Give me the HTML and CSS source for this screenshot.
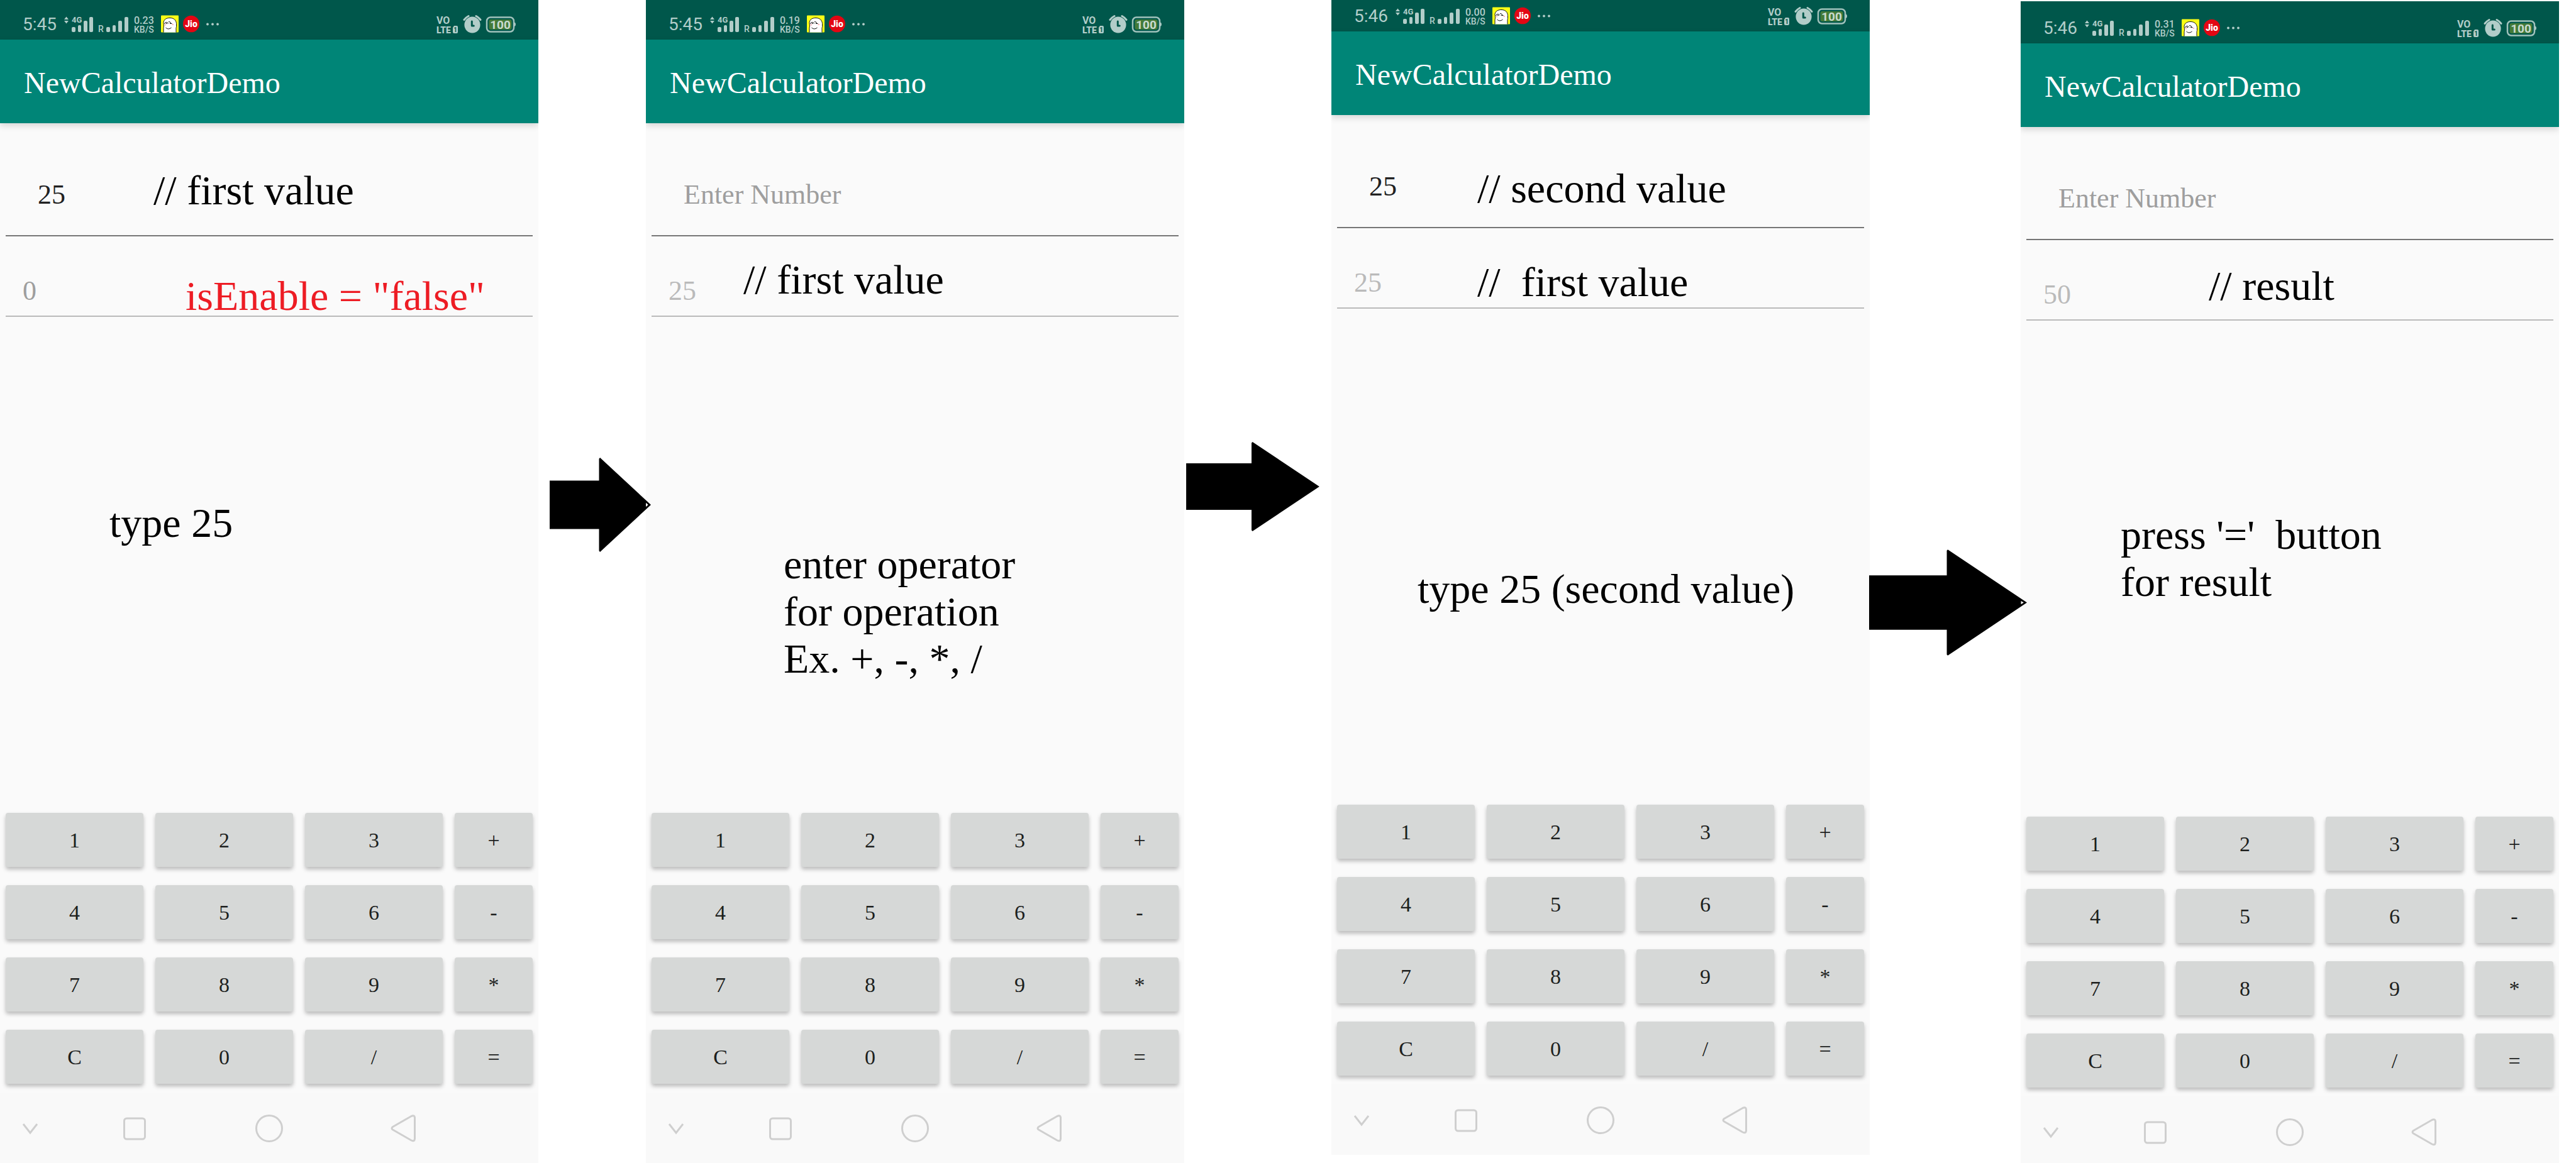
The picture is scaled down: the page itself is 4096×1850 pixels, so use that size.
FILE: index.html
```html
<!DOCTYPE html>
<html lang="en">
<head>
<meta charset="utf-8">
<title>NewCalculatorDemo</title>
<link rel="stylesheet" href="styles.css">
</head>
<body>
<svg class="sprite" aria-hidden="true">
  <symbol id="signal" viewBox="102 24 102 30" overflow="visible">
    <path d="M102 31l3.500-4.500 3.500 4.500zM102 33h7l-3.500 4.500z"/>
    <text x="114" y="36" font-size="13" font-weight="700">4G</text>
    <rect x="114" y="43" width="6" height="8" rx="2"/><rect x="124" y="40" width="5" height="11" rx="2"/><rect x="133" y="33" width="6" height="18" rx="2"/><rect x="142" y="27" width="6" height="24" rx="2"/>
    <text x="156" y="51" font-size="14" font-weight="500">R</text>
    <rect x="169" y="43" width="6" height="8" rx="2"/><rect x="179" y="40" width="5" height="11" rx="2"/><rect x="188" y="33" width="6" height="18" rx="2"/><rect x="198" y="27" width="6" height="24" rx="2"/>
  </symbol>
  <symbol id="face" viewBox="0 0 28 27">
    <rect width="28" height="27" rx="1" fill="#fcff16"/>
    <path d="M4 27V20C5 16 4 14 4 11C5 6 9 4 14 4C20 4 24 7 24.500 13V18L24 20V27z" fill="#fff"/>
    <path d="M4 27V20C5 16 4 14 4 11C5 6 9 4 14 4C20 4 24 7 24.500 13V18L24 20V27M5.500 13.500q1-3 3.500-2.500 2 .500 3 2M12 10q3-.500 4 3M7.500 19.500q4 4 9 0M8 13h2M14 13h3.500" fill="none" stroke="#111"/>
    <path d="M5.500 15h2.500M17.500 14.500h2.500" stroke="#ffb9bd" stroke-width="2"/>
  </symbol>
  <symbol id="jio" viewBox="0 0 26 27" overflow="visible">
    <ellipse cx="13" cy="13.500" rx="13" ry="13.300" fill="#e30613"/>
    <text x="13" y="18.500" font-size="14" font-weight="900" fill="#fff" text-anchor="middle">Jio</text>
  </symbol>
  <symbol id="dots" viewBox="0 0 20 30">
    <circle cx="2" cy="14.500" r="1.900"/><circle cx="10" cy="14.500" r="1.900"/><circle cx="18" cy="14.500" r="1.900"/>
  </symbol>
  <symbol id="system" viewBox="694 24 126 30" overflow="visible">
    <text x="694" y="38" font-size="16" font-weight="700">VO</text>
    <text x="694" y="53" font-size="14" font-weight="900">LTE</text>
    <path d="M722 41h4q2 0 2 2v8q0 2-2 2h-4q-2 0-2-2v-7z"/>
    <text x="724" y="51" font-size="10" font-weight="700" fill="#00574b" text-anchor="middle">1</text>
    <ellipse cx="751" cy="39.500" rx="12.600" ry="13"/>
    <path d="M738 31.500q3-4 7-6M764 31.500q-3-4-7-6" fill="none" stroke="#b2cdc9" stroke-width="3" stroke-linecap="round"/>
    <path d="M750.300 34v7h3" fill="none" stroke="#00574b" stroke-width="3" stroke-linecap="round" stroke-linejoin="round"/>
    <rect x="774" y="27.500" width="43" height="23" rx="6" fill="none" stroke="#9fc1bb" stroke-width="2.500"/>
    <path d="M818 35.500q2 .500 2 3.300t-2 3.200z"/>
    <rect x="777.500" y="31" width="36" height="16" rx="3" fill="#437a38"/>
    <text x="795.500" y="46" font-size="19" font-weight="700" fill="#c9dad0" text-anchor="middle">100</text>
  </symbol>
  <symbol id="hide" viewBox="0 0 44 44"><path d="M11 15l11 14 11-14"/></symbol>
  <symbol id="recent" viewBox="0 0 44 44"><rect x="5.500" y="6" width="33" height="33" rx="4"/></symbol>
  <symbol id="home" viewBox="0 0 44 44"><circle cx="22" cy="22" r="20.500"/></symbol>
  <symbol id="back" viewBox="0 0 44 44"><path d="M4.500 19.500L34 2.500Q39 .500 39.500 4.500V38.500Q39 43.500 34 41L4.500 24Q1.500 22 4.500 19.500z"/></symbol>
</svg>

<main class="flow">
  <section class="phone">
    <div class="status">
      <span class="time">5:45</span>
      <svg class="signal"><use href="#signal"/></svg>
      <span class="speed"><span class="rate">0.23</span><span class="unit">KB/S</span></span>
      <svg class="face"><use href="#face"/></svg>
      <svg class="jio"><use href="#jio"/></svg>
      <svg class="dots"><use href="#dots"/></svg>
      <svg class="system"><use href="#system"/></svg>
    </div>
    <header class="appbar"><h1>NewCalculatorDemo</h1></header>
    <input class="field entry" type="text" value="25" placeholder="Enter Number" aria-label="Enter Number">
    <input class="field result" type="text" placeholder="0" aria-label="Result" disabled>
    <div class="keypad">
      <button>1</button><button>2</button><button>3</button><button>+</button>
      <button>4</button><button>5</button><button>6</button><button>-</button>
      <button>7</button><button>8</button><button>9</button><button>*</button>
      <button>C</button><button>0</button><button>/</button><button>=</button>
    </div>
    <nav class="softkeys">
      <button aria-label="Hide"><svg><use href="#hide"/></svg></button>
      <button aria-label="Recent apps"><svg><use href="#recent"/></svg></button>
      <button aria-label="Home"><svg><use href="#home"/></svg></button>
      <button aria-label="Back"><svg><use href="#back"/></svg></button>
    </nav>
    <p class="note one-entry">// first value</p>
    <p class="note one-result">isEnable = "false"</p>
    <p class="note one-step">type 25</p>
  </section>

  <div class="link link-one">
    <svg class="arrow" viewBox="0 0 203 189"><path d="M0 46H99V2l2-2 102 94.500L101 189l-2-2V143H0z"/><path class="notch" d="M193 90.500l4.500 4-4.500 4z"/></svg>
  </div>

  <section class="phone">
    <div class="status">
      <span class="time">5:45</span>
      <svg class="signal"><use href="#signal"/></svg>
      <span class="speed"><span class="rate">0.19</span><span class="unit">KB/S</span></span>
      <svg class="face"><use href="#face"/></svg>
      <svg class="jio"><use href="#jio"/></svg>
      <svg class="dots"><use href="#dots"/></svg>
      <svg class="system"><use href="#system"/></svg>
    </div>
    <header class="appbar"><h1>NewCalculatorDemo</h1></header>
    <input class="field entry" type="text" placeholder="Enter Number" aria-label="Enter Number">
    <input class="field result" type="text" value="25" aria-label="Result" disabled>
    <div class="keypad">
      <button>1</button><button>2</button><button>3</button><button>+</button>
      <button>4</button><button>5</button><button>6</button><button>-</button>
      <button>7</button><button>8</button><button>9</button><button>*</button>
      <button>C</button><button>0</button><button>/</button><button>=</button>
    </div>
    <nav class="softkeys">
      <button aria-label="Hide"><svg><use href="#hide"/></svg></button>
      <button aria-label="Recent apps"><svg><use href="#recent"/></svg></button>
      <button aria-label="Home"><svg><use href="#home"/></svg></button>
      <button aria-label="Back"><svg><use href="#back"/></svg></button>
    </nav>
    <p class="note two-result">// first value</p>
    <p class="note two-step">enter operator
for operation
Ex. +, -, *, /</p>
  </section>

  <div class="link link-two">
    <svg class="arrow" viewBox="0 0 267 179"><path d="M0 43H131V2l2-2 134 89.500L133 179l-2-2V136H0z"/></svg>
  </div>

  <section class="phone raised">
    <div class="status">
      <span class="time">5:46</span>
      <svg class="signal"><use href="#signal"/></svg>
      <span class="speed"><span class="rate">0.00</span><span class="unit">KB/S</span></span>
      <svg class="face"><use href="#face"/></svg>
      <svg class="jio"><use href="#jio"/></svg>
      <svg class="dots"><use href="#dots"/></svg>
      <svg class="system"><use href="#system"/></svg>
    </div>
    <header class="appbar"><h1>NewCalculatorDemo</h1></header>
    <input class="field entry" type="text" value="25" placeholder="Enter Number" aria-label="Enter Number">
    <input class="field result" type="text" value="25" aria-label="Result" disabled>
    <div class="keypad">
      <button>1</button><button>2</button><button>3</button><button>+</button>
      <button>4</button><button>5</button><button>6</button><button>-</button>
      <button>7</button><button>8</button><button>9</button><button>*</button>
      <button>C</button><button>0</button><button>/</button><button>=</button>
    </div>
    <nav class="softkeys">
      <button aria-label="Hide"><svg><use href="#hide"/></svg></button>
      <button aria-label="Recent apps"><svg><use href="#recent"/></svg></button>
      <button aria-label="Home"><svg><use href="#home"/></svg></button>
      <button aria-label="Back"><svg><use href="#back"/></svg></button>
    </nav>
    <p class="note three-entry">// second value</p>
    <p class="note three-result">//  first value</p>
    <p class="note three-step">type 25 (second value)</p>
  </section>

  <div class="link link-three">
    <svg class="arrow" viewBox="0 0 317 213"><path d="M0 52H156V2l2-2 159 106.500L158 213l-2-2V161H0z"/><path class="notch" d="M305 103.500l5.500 3-5.500 3.500z"/></svg>
  </div>

  <section class="phone lowered">
    <div class="status">
      <span class="time">5:46</span>
      <svg class="signal"><use href="#signal"/></svg>
      <span class="speed"><span class="rate">0.31</span><span class="unit">KB/S</span></span>
      <svg class="face"><use href="#face"/></svg>
      <svg class="jio"><use href="#jio"/></svg>
      <svg class="dots"><use href="#dots"/></svg>
      <svg class="system"><use href="#system"/></svg>
    </div>
    <header class="appbar"><h1>NewCalculatorDemo</h1></header>
    <input class="field entry" type="text" placeholder="Enter Number" aria-label="Enter Number">
    <input class="field result" type="text" value="50" aria-label="Result" disabled>
    <div class="keypad">
      <button>1</button><button>2</button><button>3</button><button>+</button>
      <button>4</button><button>5</button><button>6</button><button>-</button>
      <button>7</button><button>8</button><button>9</button><button>*</button>
      <button>C</button><button>0</button><button>/</button><button>=</button>
    </div>
    <nav class="softkeys">
      <button aria-label="Hide"><svg><use href="#hide"/></svg></button>
      <button aria-label="Recent apps"><svg><use href="#recent"/></svg></button>
      <button aria-label="Home"><svg><use href="#home"/></svg></button>
      <button aria-label="Back"><svg><use href="#back"/></svg></button>
    </nav>
    <p class="note four-result">// result</p>
    <p class="note four-step">press '='  button
for result</p>
  </section>
</main>
</body>
</html>
```

FILE: styles.css
```css
* {
  box-sizing: border-box;
}

body {
  margin: 0;
  background: #fff;
  font-family: "Liberation Serif", serif;
}

.sprite {
  display: none;
}

/* four phones with an arrow between each pair */
.flow {
  display: grid;
  grid-template-columns: 856fr 171fr 856fr 234fr 856fr 240fr 856fr;
  padding-right: 27px;
  align-items: start;
}

.phone {
  position: relative;
  display: flex;
  flex-direction: column;
  min-width: 0;
  min-height: 100vh;
  overflow: hidden;
  background: #fafafa;
}

.raised {
  min-height: calc(100vh - 13px);
}

.lowered {
  margin-top: 2px;
  min-height: calc(100vh - 2px);
}

/* status bar */
.status {
  display: flex;
  align-items: flex-end;
  height: 63px;
  padding: 0 36px 9px 36px;
  background: #00574b;
  color: #b2cdc9;
  font-family: Roboto, sans-serif;
}

.raised .status {
  height: 50px;
}

.lowered .status {
  height: 67px;
}

.status svg {
  flex: none;
  height: 30px;
  overflow: visible;
  fill: #b2cdc9;
}

.time {
  width: 56px;
  margin-right: 10px;
  font-size: 28px;
  line-height: 30px;
}

.status .signal {
  width: 102px;
}

.speed {
  display: flex;
  flex-direction: column;
  width: 34px;
  margin: 0 9px;
  font-weight: 500;
  line-height: 14px;
}

.rate {
  font-size: 16px;
}

.unit {
  font-size: 14px;
}

.status .face {
  width: 28px;
  height: 28px;
  margin-bottom: 2px;
}

.status .jio {
  width: 26px;
  height: 28px;
  margin: 0 11px 2px 7px;
}

.status .dots {
  width: 20px;
}

.status .system {
  width: 126px;
  margin-left: auto;
}

/* title bar */
.appbar {
  display: flex;
  align-items: center;
  height: 133px;
  padding: 4px 38px 0;
  background: #008577;
  box-shadow: 0 4px 10px rgba(0, 0, 0, 0.15);
}

.appbar h1 {
  margin: 0;
  color: #fff;
  font-size: 48px;
  font-weight: 400;
}

/* number fields */
.field {
  margin: 48px 9px 0;
  padding: 0 0 0 51px;
  height: 132px;
  border: 0;
  border-bottom: 2px solid #757575;
  border-radius: 0;
  background: none;
  color: #212121;
  font: 44px "Liberation Serif", serif;
}

.field::placeholder {
  color: #9e9e9e;
  opacity: 1;
}

.result {
  margin-top: 46px;
  padding-left: 27px;
  height: 82px;
  border-color: #bababa;
  color: #bababa;
}

/* keypad */
.keypad {
  display: grid;
  grid-template-columns: 219fr 219fr 219fr 124fr;
  grid-auto-rows: 86px;
  gap: 29px 19px;
  margin-top: auto;
  padding: 0 9px 14px;
}

.keypad button {
  padding: 2px 0 0;
  border: 0;
  border-radius: 4px;
  background: #d6d8d7;
  box-shadow: 0 4px 6px rgba(0, 0, 0, 0.25);
  color: #1d1f1e;
  font: 34px "Liberation Serif", serif;
}

/* system navigation */
.softkeys {
  display: grid;
  grid-template-columns: 95fr 238fr 190fr 237fr 96fr;
  align-items: start;
  height: 112px;
  padding-top: 35px;
  background: #f9f9f9;
}

.lowered .softkeys {
  height: 106px;
}

.softkeys button {
  display: flex;
  justify-content: center;
  padding: 0;
  border: 0;
  background: none;
}

.softkeys svg {
  width: 44px;
  height: 44px;
  fill: none;
  stroke: #cfcfcf;
  stroke-width: 3px;
}

/* remarks written over the screens */
.note {
  position: absolute;
  margin: 0;
  color: #000;
  font-size: 66px;
  line-height: 75px;
  white-space: pre;
}

.one-entry { left: 244px; top: 265px; }
.one-result { left: 295px; top: 433px; color: #ed1c24; }
.one-step { left: 174px; top: 794px; }
.two-result { left: 155px; top: 407px; }
.two-step { left: 219px; top: 860px; }
.three-entry { left: 232px; top: 262px; }
.three-result { left: 232px; top: 411px; }
.three-step { left: 137px; top: 899px; }
.four-result { left: 299px; top: 415px; }
.four-step { left: 159px; top: 811px; }

/* arrows */
.link {
  position: relative;
  z-index: 1;
  display: flex;
  min-width: 0;
}

.arrow {
  flex: none;
  fill: #000;
}

.notch {
  fill: #fff;
}

.link-one { padding: 728px 0 0 18px; }
.link-one .arrow { width: 161px; height: 150px; }
.link-two { padding: 703px 0 0 3px; }
.link-two .arrow { width: 212px; height: 142px; }
.link-three { padding-top: 874px; }
.link-three .arrow { width: 251px; height: 169px; margin-left: -1px; }
```
